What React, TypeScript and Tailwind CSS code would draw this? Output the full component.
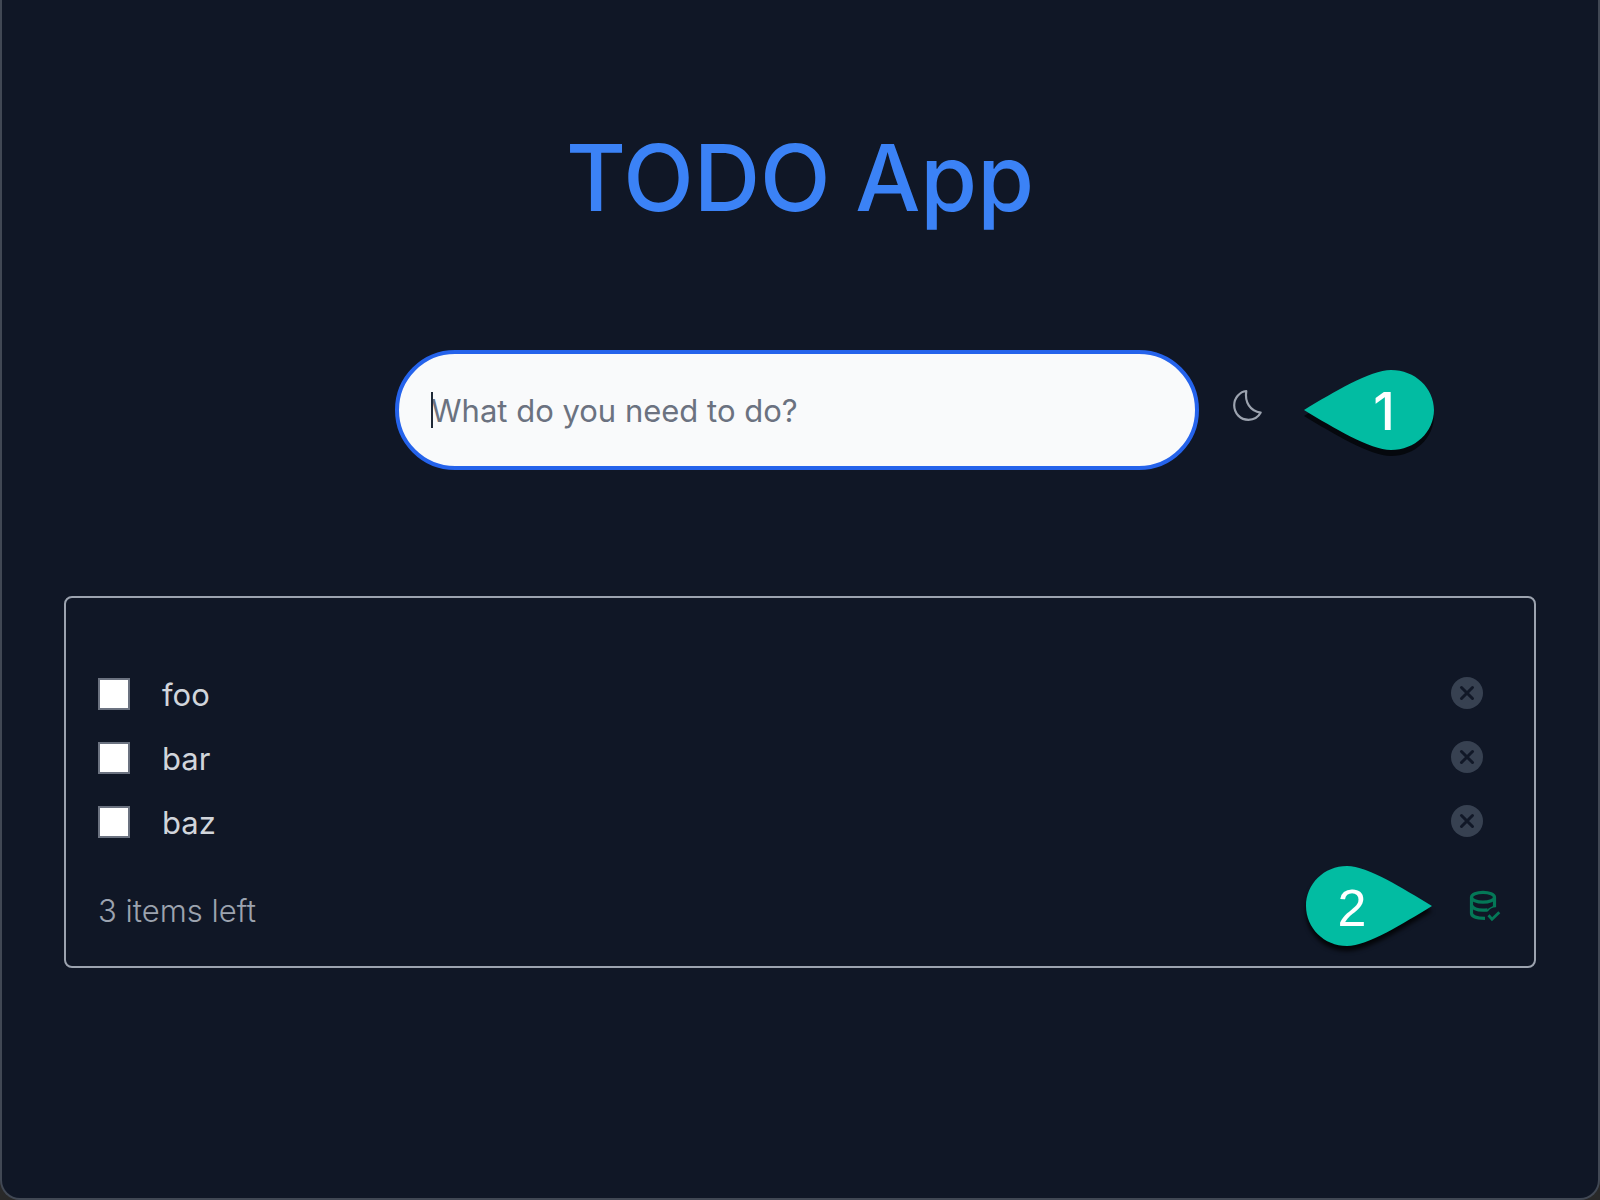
import React, { useState } from "react";

function MoonIcon() {
  return (
    <svg viewBox="0 0 32 32" className="size-8" fill="none" stroke="currentColor" strokeWidth="2.200" strokeLinejoin="round" aria-hidden="true">
      <path d="M14.300 2C7.500 2.800 2.200 9.200 2.200 16.300C2.200 24.500 8.400 30.800 16.500 30.800C21.800 30.800 26.300 28.200 28.700 23.600C18 22 12.500 13 14.300 2Z" />
    </svg>
  );
}

function RemoveIcon() {
  return (
    <svg viewBox="0 0 32 32" className="size-8" aria-hidden="true">
      <circle cx="16" cy="16" r="16" fill="#374151" />
      <path d="M10.500 10.500L21.500 21.500M21.500 10.500L10.500 21.500" stroke="#111827" strokeWidth="3" strokeLinecap="round" />
    </svg>
  );
}

function DatabaseCheckIcon() {
  return (
    <svg viewBox="0 0 32 32" className="size-8" fill="none" stroke="currentColor" strokeWidth="3.200" aria-hidden="true">
      <ellipse cx="14" cy="7.200" rx="11.500" ry="4.900" />
      <path d="M2.500 7.200V23.300C2.500 26.300 8 28.300 16 28.300" />
      <path d="M25.500 7.200V17" />
      <path d="M2.500 15.500C4 18.800 10 20.600 18.500 19.800" />
      <path d="M16.500 21.300L19.800 18.200L26.900 14.500V17.200C23.500 17.200 21 18.500 19 21.300Z" fill="currentColor" stroke="none" />
      <path d="M19.500 25.300L23 29.200L30.300 22.200" strokeWidth="2.800" />
    </svg>
  );
}

function CalloutLeft() {
  return (
    <div className="relative h-20 w-[130px] shrink-0">
      <svg viewBox="0 0 130 80" className="h-20 w-[130px] overflow-visible" aria-hidden="true">
        <path d="M0 46C30 28 66 6 87 6C111 6 130 24 130 46C130 68 111 86 87 86C66 86 30 64 0 46Z" fill="#05080d" />
        <path d="M0 40C30 22 66 0 87 0C111 0 130 18 130 40C130 62 111 80 87 80C66 80 30 58 0 40Z" fill="#02bca2" />
      </svg>
      <span className="absolute inset-y-0 right-0 flex w-[100px] items-center justify-center pt-1 font-['Inter',sans-serif] text-[52px] leading-none font-medium text-white">1</span>
    </div>
  );
}

function CalloutRight() {
  return (
    <div className="relative h-20 w-[126px] shrink-0">
      <svg viewBox="0 0 126 80" className="h-20 w-[126px] overflow-visible drop-shadow-[0_5px_2px_rgba(0,0,0,0.8)]" aria-hidden="true">
        <path d="M126 40C96 22 62 0 41 0C18 0 0 18 0 40C0 62 18 80 41 80C62 80 96 58 126 40Z" fill="#02bca2" />
      </svg>
      <span className="absolute inset-y-0 left-0 flex w-[92px] items-center justify-center pt-1 font-['Liberation_Sans',Arial,sans-serif] text-[52px] leading-none text-white">2</span>
    </div>
  );
}

const initialItems = ["foo", "bar", "baz"];

export default function App() {
  const [items, setItems] = useState(initialItems);
  const [text, setText] = useState("");

  const add = (e: React.FormEvent) => {
    e.preventDefault();
    if (text.trim()) {
      setItems([...items, text.trim()]);
      setText("");
    }
  };

  return (
    <div className="min-h-screen bg-[#292929] font-['Inter',sans-serif]">
      <main className="min-h-screen rounded-b-[20px] border-x-2 border-b-2 border-[#414854] bg-[#101726] px-[62px] pt-[130px] pb-16">
        <h1 className="text-center text-[92px] leading-24 font-medium text-[#3b82f6]">TODO App</h1>

        <form onSubmit={add} className="mt-[124px] grid grid-cols-[331fr_804fr_337fr] items-center">
          <div className="relative col-start-2">
            <input
              type="text"
              aria-label="New task"
              placeholder="What do you need to do?"
              value={text}
              onChange={(e) => setText(e.target.value)}
              className="h-30 w-full rounded-full border-4 border-[#2563eb] bg-[#f9fafb] px-8 text-[31px] text-[#111827] caret-transparent outline-none placeholder:text-[#6b7280]"
            />
            <span className="absolute top-[42px] left-9 h-9 w-0.5 bg-[#1f2937]" />
          </div>
          <div className="flex items-center pl-[33px]">
            <button type="button" aria-label="Toggle dark mode" className="-mt-2.5 mr-10 shrink-0 text-[#9ca3af]">
              <MoonIcon />
            </button>
            <CalloutLeft />
          </div>
        </form>

        <section className="mt-[126px] rounded-lg border-2 border-[#9ca3af] px-8 pt-20 pb-5">
          <ul className="flex flex-col gap-8">
            {items.map((item, i) => (
              <li key={i} className="flex h-8 items-center">
                <label className="flex items-center gap-8 text-[31px] leading-8 text-[#d1d5db]">
                  <input type="checkbox" className="size-8 appearance-none border-2 border-[#6b7280] bg-white checked:bg-[#2563eb]" />
                  <span className="pt-0.5">{item}</span>
                </label>
                <button
                  type="button"
                  aria-label={"Remove " + item}
                  onClick={() => setItems(items.filter((_, j) => j !== i))}
                  className="mr-[19px] mb-0.5 ml-auto"
                >
                  <RemoveIcon />
                </button>
              </li>
            ))}
          </ul>
          <div className="mt-7 flex items-center">
            <p className="pt-2.5 text-[31px] leading-8 font-light text-[#9ca3af]">{items.length} items left</p>
            <div className="ml-auto flex items-center gap-[37px] pr-px">
              <CalloutRight />
              <button type="button" aria-label="Saved" className="text-[#047857]">
                <DatabaseCheckIcon />
              </button>
            </div>
          </div>
        </section>
      </main>
    </div>
  );
}
